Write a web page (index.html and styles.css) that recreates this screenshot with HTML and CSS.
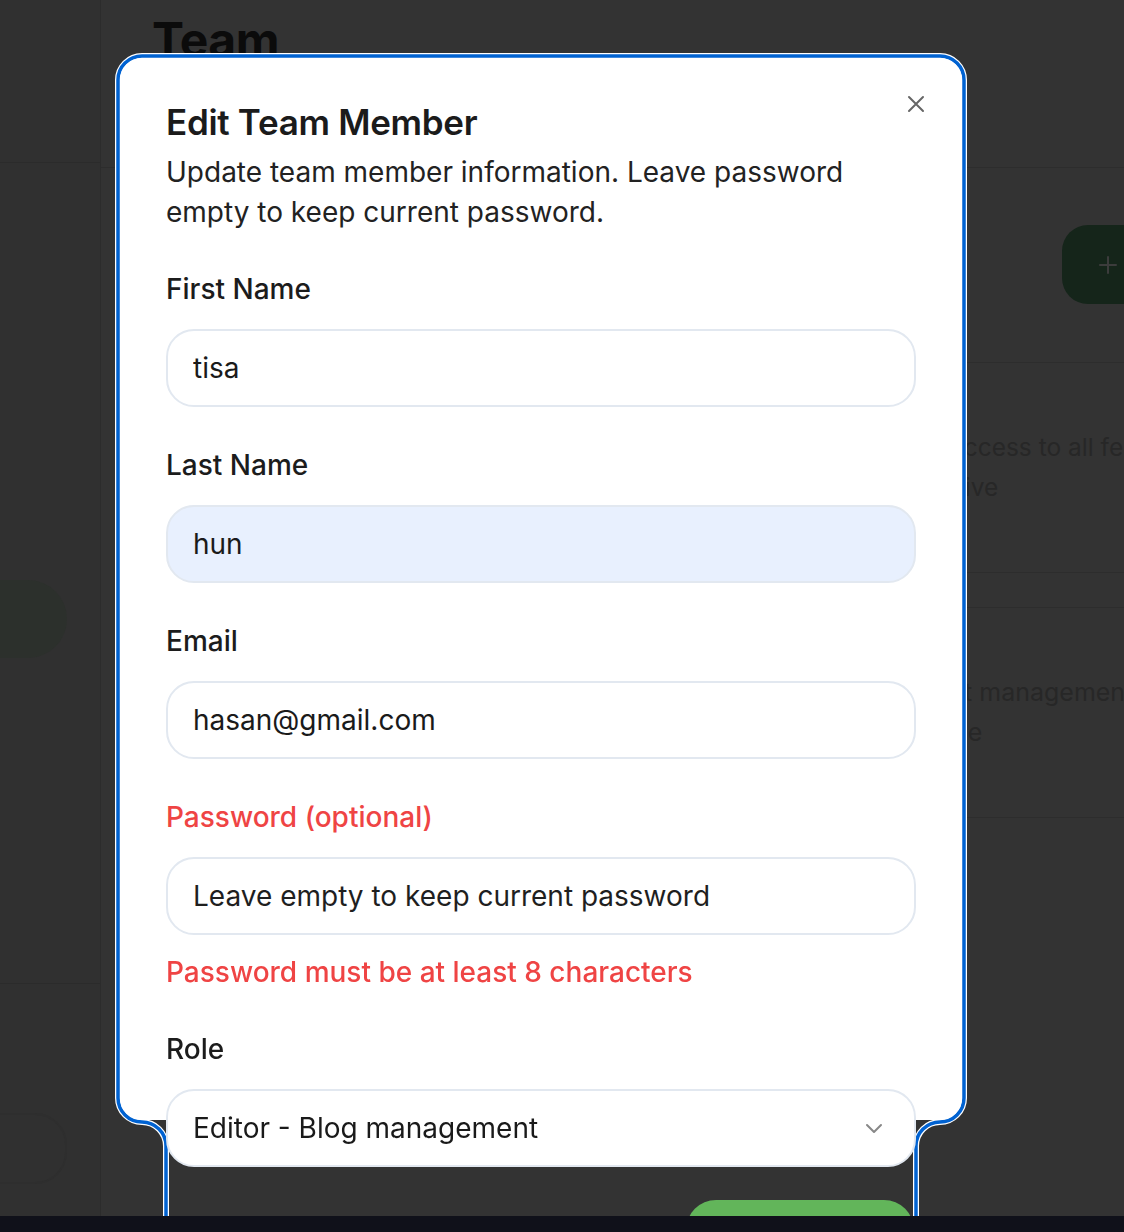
FILE: index.html
```html
<!DOCTYPE html>
<html lang="en">
<head>
<meta charset="utf-8">
<title>Team</title>
<link rel="stylesheet" href="styles.css">
</head>
<body>
<div class="app">
  <aside class="sidebar">
    <div class="side-head"></div>
    <div class="side-pill active"></div>
    <div class="side-divider"></div>
    <div class="side-pill outline"></div>
  </aside>
  <main class="main">
    <header class="main-head">
      <h1 class="page-title">Team</h1>
    </header>
    <div class="toolbar">
      <div class="add-btn">
        <svg width="24" height="24" viewBox="0 0 24 24" fill="none" stroke="#3c3c3c" stroke-width="2" stroke-linecap="round"><path d="M12 4v16M4 12h16"/></svg>
        <span>Add Member</span>
      </div>
    </div>
    <div class="cards">
      <div class="card first">
        <div class="card-text">
          <div>Full access to all features</div>
          <div class="shift">Inactive</div>
        </div>
      </div>
      <div class="card second">
        <div class="card-text">
          <div>Post management</div>
          <div>Done</div>
        </div>
      </div>
    </div>
  </main>
</div>

<svg class="focus-ring" width="1124" height="1232" viewBox="0 0 1124 1232" fill="none">
  <path d="M166 1240 V1146 A24 24 0 0 0 142 1122 A24 24 0 0 1 118 1098 V80 A24 24 0 0 1 142 56 H940 A24 24 0 0 1 964 80 V1098 A24 24 0 0 1 940 1122 A24 24 0 0 0 916 1146 V1240" stroke="#ffffff" stroke-width="6"/>
  <path d="M166 1240 V1146 A24 24 0 0 0 142 1122 A24 24 0 0 1 118 1098 V80 A24 24 0 0 1 142 56 H940 A24 24 0 0 1 964 80 V1098 A24 24 0 0 1 940 1122 A24 24 0 0 0 916 1146 V1240" stroke="#0062d1" stroke-width="3.5"/>
</svg>

<div class="dialog">
  <svg class="close" width="18" height="18" viewBox="0 0 18 18" fill="none" stroke="#666" stroke-width="2" stroke-linecap="round"><path d="M2 2l14 14M16 2L2 16"/></svg>
  <h2 class="dlg-title">Edit Team Member</h2>
  <p class="dlg-desc">Update team member information. Leave password empty to keep current password.</p>
  <div class="form">
    <div class="field">
      <label class="label">First Name</label>
      <input class="input" type="text" value="tisa">
    </div>
    <div class="field">
      <label class="label">Last Name</label>
      <input class="input autofill" type="text" value="hun">
    </div>
    <div class="field">
      <label class="label">Email</label>
      <input class="input" type="text" value="hasan@gmail.com">
    </div>
    <div class="field">
      <label class="label error">Password (optional)</label>
      <input class="input" type="password" placeholder="Leave empty to keep current password">
      <p class="err-msg">Password must be at least 8 characters</p>
    </div>
    <div class="field role">
      <label class="label">Role</label>
      <div class="select">
        <span>Editor - Blog management</span>
        <svg width="22" height="22" viewBox="0 0 22 22" fill="none" stroke="#888" stroke-width="2" stroke-linecap="round" stroke-linejoin="round"><path d="M4 8l7 7 7-7"/></svg>
      </div>
    </div>
    <div class="actions">
      <div class="save-btn">Update Member</div>
    </div>
  </div>
</div>

<div class="bottom-bar"></div>
</body>
</html>
```
FILE: styles.css
```css
html, body {
  margin: 0;
  padding: 0;
}
body {
  background: #333333;
  font-family: Inter, "Liberation Sans", sans-serif;
  height: 1232px;
  overflow: hidden;
}
.app {
  display: flex;
  height: 1232px;
}
.sidebar {
  width: 100px;
  flex: none;
  background: #303030;
  border-right: 1px solid #2c2c2c;
  display: flex;
  flex-direction: column;
  overflow: hidden;
}
.side-head {
  height: 162px;
  flex: none;
  border-bottom: 1px solid #2b2b2b;
}
.side-pill {
  flex: none;
  margin-left: -60px;
  width: 127px;
  box-sizing: border-box;
}
.side-pill.active {
  margin-top: 417px;
  height: 78px;
  border-radius: 39px;
  background: #2c302c;
}
.side-divider {
  margin-top: 325px;
  height: 1px;
  background: #2b2b2b;
  flex: none;
}
.side-pill.outline {
  margin-top: 129px;
  height: 71px;
  border-radius: 32px;
  border: 2px solid #2e2e2e;
}
.main {
  flex: 1;
  display: flex;
  flex-direction: column;
  overflow: hidden;
}
.main-head {
  height: 168px;
  flex: none;
  border-bottom: 1px solid #2d2d2d;
  padding-left: 51px;
  box-sizing: border-box;
}
.page-title {
  margin: 10px 0 0;
  font-size: 48px;
  font-weight: 700;
  line-height: normal;
  color: #0b0b0b;
  letter-spacing: -0.5px;
}
.toolbar {
  display: flex;
  justify-content: flex-end;
  margin-top: 57px;
  flex: none;
}
.add-btn {
  display: flex;
  align-items: center;
  gap: 14px;
  height: 79px;
  width: 240px;
  margin-right: -178px;
  padding-left: 34px;
  box-sizing: border-box;
  border-radius: 26px;
  background: #15251a;
  color: #3a3a3a;
  font-size: 26px;
  white-space: nowrap;
}
.cards {
  margin-top: 58px;
  display: flex;
  flex-direction: column;
  gap: 34px;
  margin-left: 52px;
  margin-right: -40px;
}
.card {
  height: 211px;
  box-sizing: border-box;
  border: 1px solid #2d2d2d;
  border-radius: 12px;
  padding: 64px 0 0 749px;
}
.card.second {
  padding-left: 766px;
}
.card-text {
  font-size: 24.5px;
  line-height: 40px;
  color: #272727;
  white-space: nowrap;
}
.card.second .card-text {
  font-size: 25px;
}
.card-text .shift {
  padding-left: 5px;
}

/* Dialog */
.focus-ring {
  position: fixed;
  left: 0;
  top: 0;
  pointer-events: none;
}
.dialog {
  position: fixed;
  left: 120px;
  top: 58px;
  width: 842px;
  height: 1062px;
  box-sizing: border-box;
  padding: 47px 46px 0;
  background: #ffffff;
  border-radius: 22px;
}
.close {
  position: absolute;
  top: 37px;
  right: 37px;
}
.dlg-title {
  margin: 0;
  font-size: 35px;
  font-weight: 600;
  line-height: 35px;
  letter-spacing: -0.3px;
  color: #1b1b1b;
}
.dlg-desc {
  margin: 12px 0 0;
  font-size: 28px;
  line-height: 40px;
  color: #222222;
}
.form {
  margin-top: 43px;
  display: flex;
  flex-direction: column;
  gap: 44px;
}
.field {
  display: flex;
  flex-direction: column;
}
.label {
  font-size: 28px;
  line-height: 28px;
  font-weight: 500;
  color: #1c1c1c;
  margin-bottom: 26px;
}
.label.error {
  color: #ef4444;
}
.input {
  height: 78px;
  box-sizing: border-box;
  border: 2px solid #e2e8f0;
  border-radius: 28px;
  padding: 0 25px;
  font-family: Inter, "Liberation Sans", sans-serif;
  font-size: 28px;
  color: #1a1a1a;
  background: #ffffff;
  outline: none;
  width: 100%;
}
.input.autofill {
  background: #e8f0fe;
}
.input::placeholder {
  color: #1f1f1f;
  opacity: 1;
}
.err-msg {
  margin: 23px 0 0;
  font-size: 28px;
  line-height: 28px;
  font-weight: 500;
  color: #ef4444;
}
.field.role {
  margin-top: 5px;
}
.select {
  height: 78px;
  box-sizing: border-box;
  border: 2px solid #e2e8f0;
  border-radius: 28px;
  padding: 0 29px 0 25px;
  display: flex;
  align-items: center;
  justify-content: space-between;
  font-size: 28px;
  color: #1a1a1a;
  background: #ffffff;
}
.actions {
  display: flex;
  justify-content: flex-end;
  margin-top: -11px;
}
.save-btn {
  width: 228px;
  height: 78px;
  margin-right: 2px;
  border-radius: 30px;
  background: #62b55a;
  color: #ffffff;
  font-size: 27px;
  font-weight: 500;
  display: flex;
  align-items: center;
  justify-content: center;
}
.bottom-bar {
  position: fixed;
  left: 0;
  right: 0;
  bottom: 0;
  height: 16px;
  background: #10111a;
}
```
